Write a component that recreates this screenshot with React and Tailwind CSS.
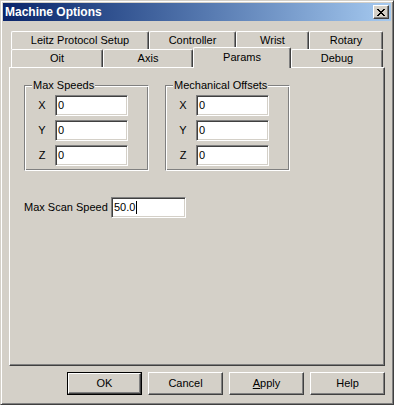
import React from "react";

const font = { fontFamily: '"Liberation Sans", Arial, sans-serif' };

function Tab({ w, children, selected }) {
  return (
    <div
      className={
        "flex items-center justify-center border-l border-t border-r border-l-white border-t-white border-r-[#404040] rounded-tl-[2px] rounded-tr-[2px] shadow-[inset_-1px_0_0_#808080] bg-[#d4d0c8] " +
        (selected ? "h-[21px] -mb-[1px] relative z-10 pb-[2px]" : "h-[18px]")
      }
      style={{ width: w }}
    >
      {children}
    </div>
  );
}

function Edit({ value, caret, w = 74 }) {
  return (
    <div
      className="h-[21px] bg-white border border-t-[#808080] border-l-[#808080] border-r-white border-b-white shadow-[inset_1px_1px_0_#404040,inset_-1px_-1px_0_#d4d0c8] flex items-center pl-[2px] pb-[1px]"
      style={{ width: w }}
    >
      <span>{value}</span>
      {caret && <span className="w-[1px] h-[13px] bg-black ml-[1px]" />}
    </div>
  );
}

function Group({ title }) {
  return (
    <fieldset className="w-[125px] border border-t-[#808080] border-l-[#808080] border-r-white border-b-white shadow-[inset_1px_1px_0_white,inset_-1px_-1px_0_#808080] pt-[3px] pb-[4px] flex flex-col gap-[4px]">
      <legend className="ml-[7px] px-[1px] leading-[13px] bg-[#d4d0c8]">{title}</legend>
      {["X", "Y", "Z"].map((l) => (
        <div key={l} className="flex items-center">
          <div className="ml-[7px] w-[20px] text-center text-[#000]">{l}</div>
          <div className="ml-[3px]">
            <Edit value="0" w={73} />
          </div>
        </div>
      ))}
    </fieldset>
  );
}

function Button({ children, def }) {
  const inner = (
    <div className="w-full h-full flex items-center justify-center border border-t-white border-l-white border-r-[#404040] border-b-[#404040] shadow-[inset_-1px_-1px_0_#808080]">
      {children}
    </div>
  );
  return def ? (
    <div className="w-[75px] h-[23px] border border-black">{inner}</div>
  ) : (
    <div className="w-[75px] h-[23px]">{inner}</div>
  );
}

export default function App() {
  return (
    <div
      className="w-[394px] h-[405px] bg-[#d4d0c8] text-[11px] leading-[13px] text-black border border-t-[#d4d0c8] border-l-[#d4d0c8] border-r-[#404040] border-b-[#404040] shadow-[inset_1px_1px_0_white,inset_-1px_-1px_0_#808080] p-[2px] flex flex-col"
      style={font}
    >
      {/* Title bar */}
      <div className="h-[18px] bg-gradient-to-r from-[#0a246a] to-[#a6caf0] flex items-center justify-between pl-[2px] pr-[2px]">
        <span className="text-white font-bold text-[12px] leading-[14px] pb-[1px]">Machine Options</span>
        <div className="w-[16px] h-[14px] bg-[#d4d0c8] border border-t-white border-l-white border-r-[#404040] border-b-[#404040] shadow-[inset_-1px_-1px_0_#808080] flex items-center justify-center">
          <svg width="8" height="7" viewBox="0 0 8 7" shapeRendering="crispEdges">
            <path d="M0 0h2v1h-2zM6 0h2v1h-2zM1 1h2v1h-2zM5 1h2v1h-2zM2 2h4v1h-4zM3 3h2v1h-2zM2 4h4v1h-4zM1 5h2v1h-2zM5 5h2v1h-2zM0 6h2v1h-2zM6 6h2v1h-2z" fill="#000" />
          </svg>
        </div>
      </div>

      {/* Body */}
      <div className="px-[6px] pt-[10px] flex flex-col">
        <div className="flex pl-[2px]">
          <Tab w={138}>Leitz Protocol Setup</Tab>
          <Tab w={87}>Controller</Tab>
          <Tab w={73}>Wrist</Tab>
          <Tab w={74}>Rotary</Tab>
        </div>
        <div className="flex items-end pl-[2px] h-[18px]">
          <Tab w={92}>Oit</Tab>
          <Tab w={90}>Axis</Tab>
          <Tab w={98} selected>Params</Tab>
          <Tab w={92}>Debug</Tab>
        </div>

        {/* Panel */}
        <div className="h-[299px] border border-t-white border-l-white border-r-[#404040] border-b-[#404040] shadow-[inset_-1px_-1px_0_#808080] pt-[11px] pl-[14px] flex flex-col">
          <div className="flex gap-[16px]">
            <Group title="Max Speeds" />
            <Group title="Mechanical Offsets" />
          </div>
          <div className="flex items-center mt-[26px]">
            <span className="w-[87px]">Max Scan Speed</span>
            <Edit value="50.0" caret w={75} />
          </div>
        </div>

        {/* Buttons */}
        <div className="flex justify-end gap-[6px] mt-[6px]">
          <Button def>OK</Button>
          <Button>Cancel</Button>
          <Button>
            <span>
              <span className="underline">A</span>pply
            </span>
          </Button>
          <Button>Help</Button>
        </div>
      </div>
    </div>
  );
}
